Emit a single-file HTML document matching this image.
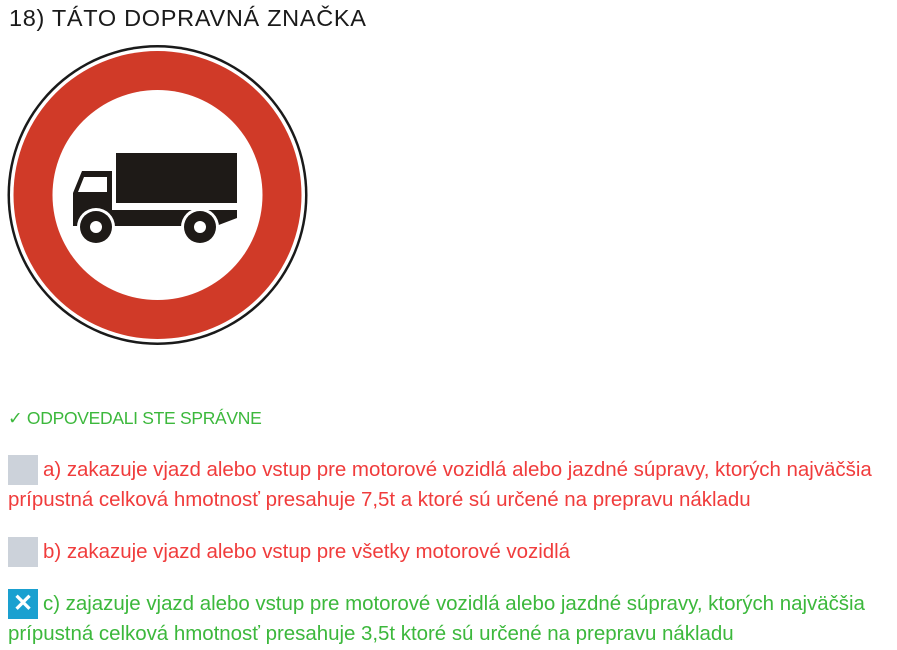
<!DOCTYPE html>
<html><head><meta charset="utf-8"><style>
body{margin:0;background:#fff;width:897px;height:650px;overflow:hidden;font-family:"Liberation Sans",sans-serif;}
.t{position:absolute;left:9px;top:5px;font-size:23.5px;color:#1a1a1a;letter-spacing:0.7px;}
.ok{position:absolute;left:8px;top:408px;font-size:17.5px;color:#3cb83c;letter-spacing:-0.3px;}
.o{position:absolute;left:8px;font-size:20.5px;line-height:30px;width:890px;letter-spacing:-0.03px;white-space:nowrap}
.r{color:#f03c3c}.g{color:#3cb83c}
.cb{display:inline-block;width:30px;height:30px;background:#ccd2da;vertical-align:top;margin-right:5px;position:relative}
.cb.x{background:#1aa0d0;color:#fff;font-weight:bold;text-align:center;font-size:24px;line-height:30px}
</style></head><body>
<div class="t">18) TÁTO DOPRAVNÁ ZNAČKA</div>
<svg style="position:absolute;left:0;top:0" width="320" height="350">
<circle cx="157.5" cy="195" r="150" fill="#1a1a1a"/>
<circle cx="157.5" cy="195" r="147.5" fill="#fff"/>
<circle cx="157.5" cy="195" r="144" fill="#d03a28"/>
<circle cx="157.5" cy="195" r="105" fill="#fff"/>
<rect x="116" y="153" width="121" height="50" fill="#1e1a17"/>
<path d="M82 171 H112 V210 H237 V218 L216 226 H80 L73 226 V193 Z" fill="#1e1a17"/>
<path d="M84 177 H107 V192 H78 Z" fill="#fff"/>
<circle cx="96" cy="227" r="19" fill="#fff"/>
<circle cx="96" cy="227" r="16" fill="#1e1a17"/>
<circle cx="96" cy="227" r="6" fill="#fff"/>
<circle cx="200" cy="227" r="19" fill="#fff"/>
<circle cx="200" cy="227" r="16" fill="#1e1a17"/>
<circle cx="200" cy="227" r="6" fill="#fff"/>
</svg>
<div class="ok">✓ ODPOVEDALI STE SPRÁVNE</div>
<div class="o r" style="top:455px"><span class="cb"></span>a) zakazuje vjazd alebo vstup pre motorové vozidlá alebo jazdné súpravy, ktorých najväčšia<br>prípustná celková hmotnosť presahuje 7,5t a ktoré sú určené na prepravu nákladu</div>
<div class="o r" style="top:537px"><span class="cb"></span>b) zakazuje vjazd alebo vstup pre všetky motorové vozidlá</div>
<div class="o g" style="top:589px"><span class="cb x">✕</span>c) zajazuje vjazd alebo vstup pre motorové vozidlá alebo jazdné súpravy, ktorých najväčšia<br>prípustná celková hmotnosť presahuje 3,5t ktoré sú určené na prepravu nákladu</div>
</body></html>
